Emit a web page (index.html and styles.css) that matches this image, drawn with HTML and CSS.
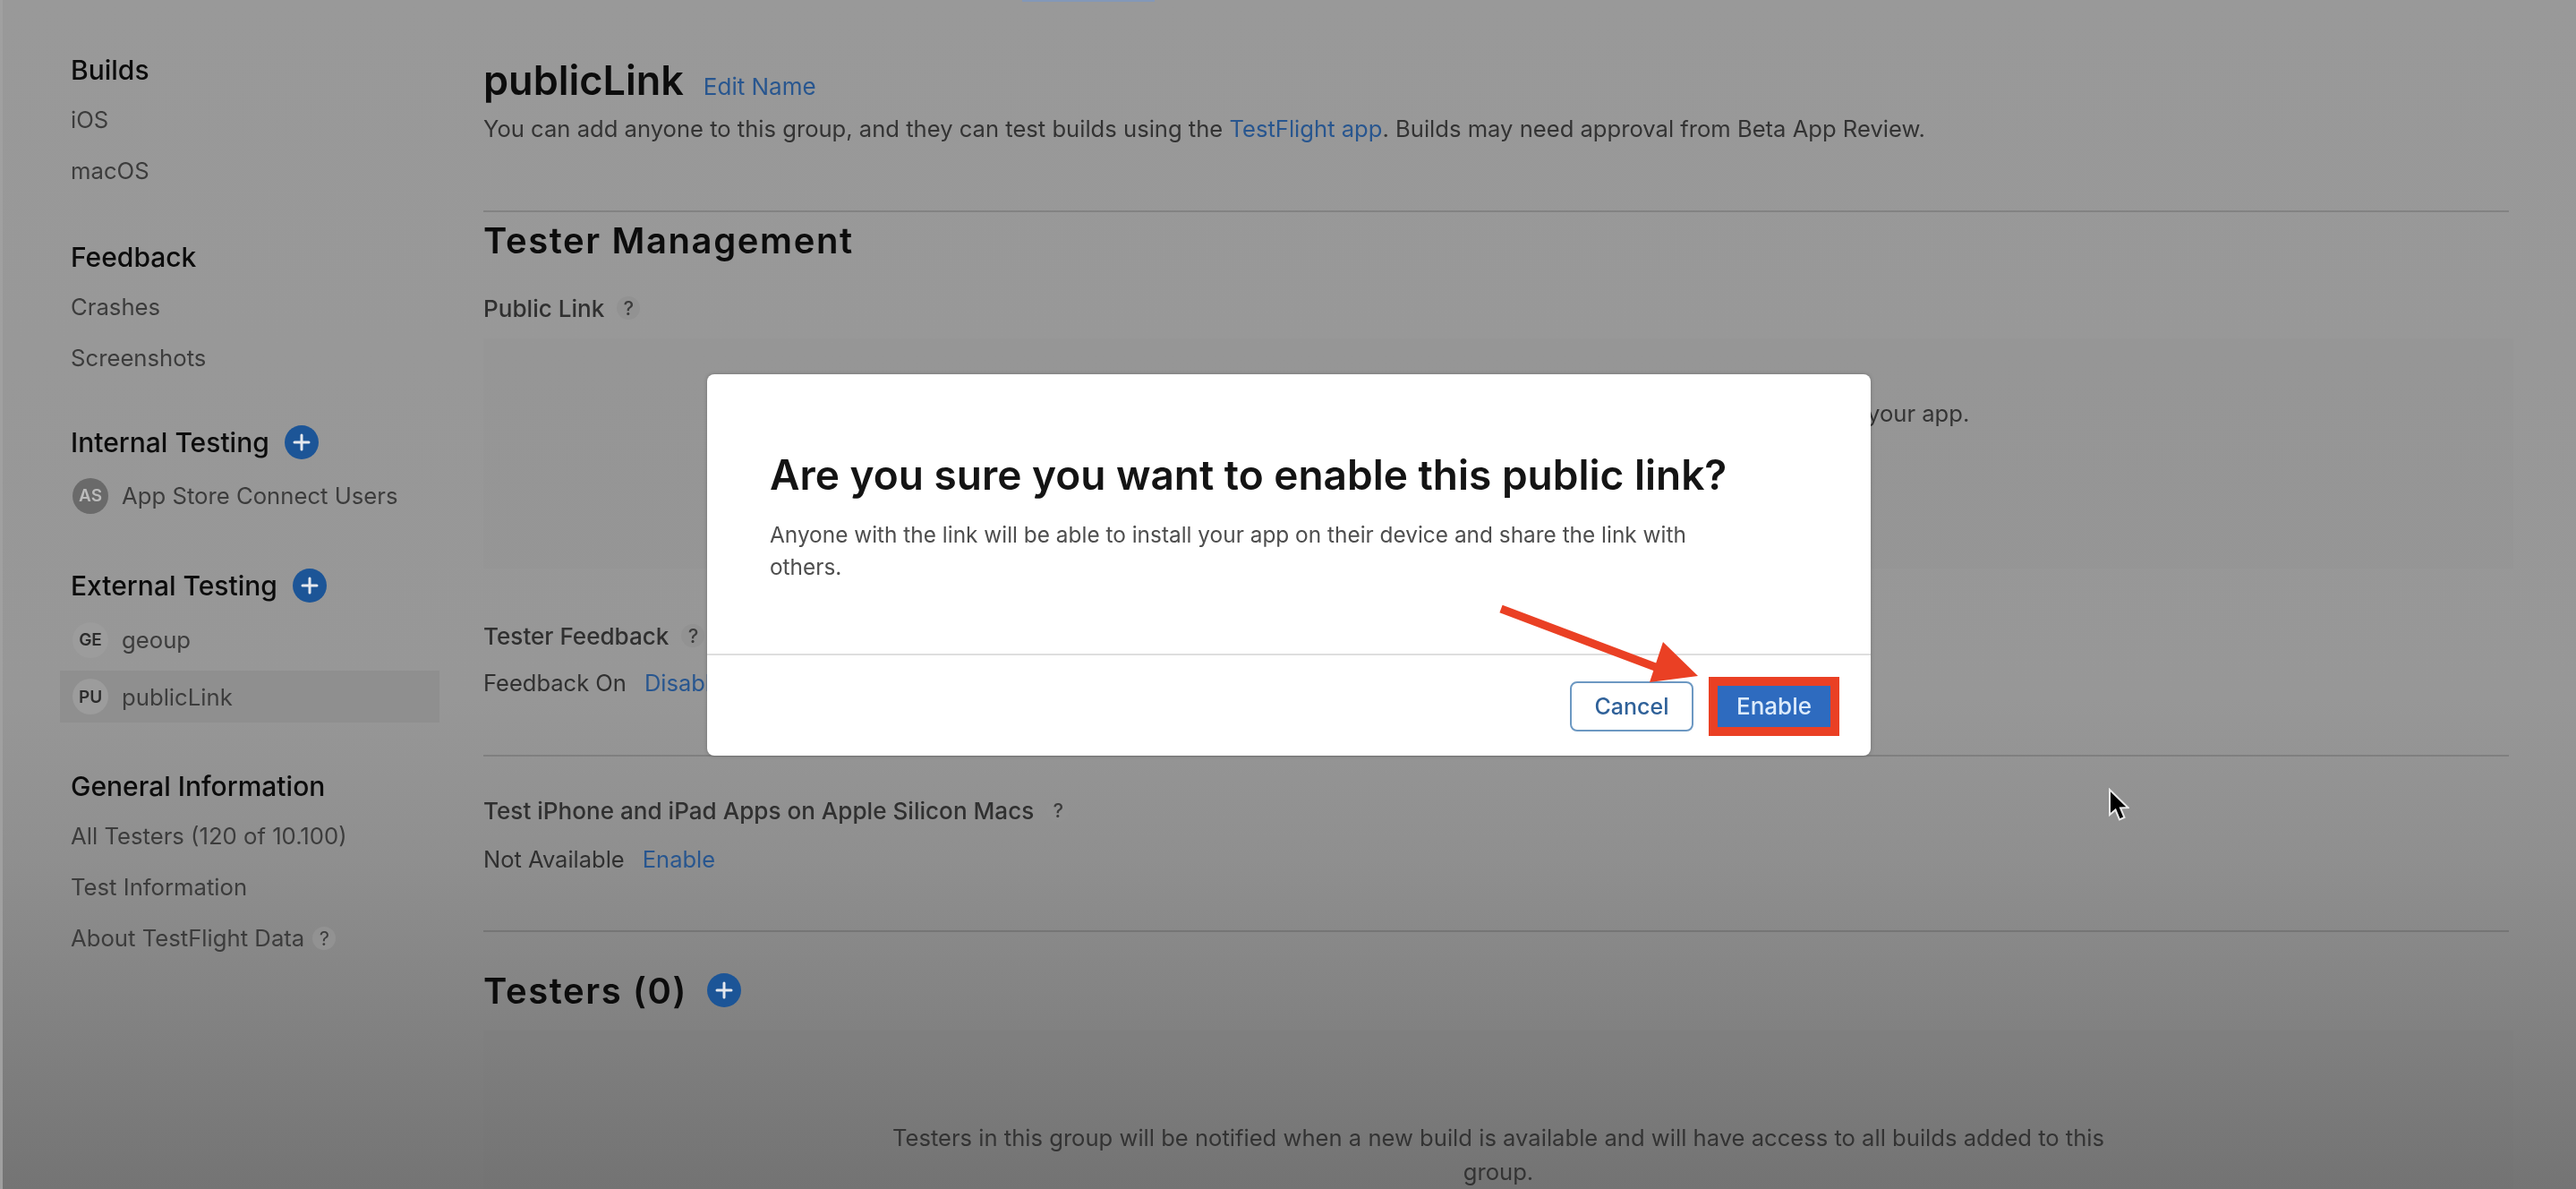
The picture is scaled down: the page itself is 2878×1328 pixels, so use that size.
FILE: index.html
```html
<!DOCTYPE html>
<html lang="en">
<head>
<meta charset="utf-8">
<title>publicLink - TestFlight</title>
<link rel="stylesheet" href="styles.css">
</head>
<body>
<div class="page">
  <div class="topstrip"><span class="topstrip-tab"></span></div>
  <div class="layout">
    <nav class="sidebar">
      <section class="nav-group nav-group-builds">
        <h3 class="nav-title">Builds</h3>
        <a class="nav-item">iOS</a>
        <a class="nav-item">macOS</a>
      </section>
      <section class="nav-group">
        <h3 class="nav-title">Feedback</h3>
        <a class="nav-item">Crashes</a>
        <a class="nav-item">Screenshots</a>
      </section>
      <section class="nav-group nav-group-internal">
        <h3 class="nav-title">Internal Testing
          <svg class="plus" viewBox="0 0 38 38"><circle cx="19" cy="19" r="19"/><path d="M19 11v16M11 19h16"/></svg>
        </h3>
        <a class="nav-item nav-avatar-row"><span class="avatar avatar-dark">AS</span>App Store Connect Users</a>
      </section>
      <section class="nav-group nav-group-external">
        <h3 class="nav-title">External Testing
          <svg class="plus" viewBox="0 0 38 38"><circle cx="19" cy="19" r="19"/><path d="M19 11v16M11 19h16"/></svg>
        </h3>
        <a class="nav-item nav-avatar-row nav-first"><span class="avatar">GE</span>geoup</a>
        <a class="nav-item nav-avatar-row nav-active"><span class="avatar">PU</span>publicLink</a>
      </section>
      <section class="nav-group">
        <h3 class="nav-title">General Information</h3>
        <a class="nav-item">All Testers (120 of 10.100)</a>
        <a class="nav-item">Test Information</a>
        <a class="nav-item">About TestFlight Data <span class="help help-tight">?</span></a>
      </section>
    </nav>
    <main class="main">
      <header class="head">
        <div class="head-row"><h1 class="page-title">publicLink</h1><a class="link link-edit">Edit Name</a></div>
        <p class="text">You can add anyone to this group, and they can test builds using the <a class="link">TestFlight app</a>. Builds may need approval from Beta App Review.</p>
      </header>
      <section class="section section-mgmt">
        <h2 class="section-title spaced">Tester Management</h2>
        <div class="label">Public Link <span class="help">?</span></div>
        <div class="panel panel-link"><p class="text">Enable a public link so that anyone with it can join this group and start testing your app.</p></div>
        <div class="label label-feedback">Tester Feedback <span class="help">?</span></div>
        <div class="value"><span>Feedback On</span><a class="link">Disable</a></div>
      </section>
      <section class="section section-macs">
        <div class="label">Test iPhone and iPad Apps on Apple Silicon Macs <span class="help">?</span></div>
        <div class="value"><span>Not Available</span><a class="link">Enable</a></div>
      </section>
      <section class="section section-testers">
        <h2 class="section-title spaced">Testers (0)
          <svg class="plus" viewBox="0 0 38 38"><circle cx="19" cy="19" r="19"/><path d="M19 11v16M11 19h16"/></svg>
        </h2>
        <div class="panel panel-testers"><p class="text">Testers in this group will be notified when a new build is available and will have access to all builds added to this group.</p></div>
      </section>
    </main>
  </div>

  <div class="dialog" role="dialog">
    <div class="dialog-body">
      <h2 class="dialog-title">Are you sure you want to enable this public link?</h2>
      <p class="dialog-text">Anyone with the link will be able to install your app on their device and share the link with others.</p>
    </div>
    <div class="dialog-footer">
      <button class="btn btn-cancel">Cancel</button>
      <span class="highlight-frame"><button class="btn btn-enable">Enable</button></span>
    </div>
  </div>

  <svg class="arrow" viewBox="0 0 230 90"><path class="arrow-line" d="M2 5 L185 74"/><path class="arrow-head" d="M222 80 L183 42 L168 87 Z"/></svg>

  <svg class="cursor" viewBox="0 0 24 38"><path d="M2 2 V30 L8.5 24.5 L13 35.5 L18.5 33 L14 22.5 L22.5 22 Z"/></svg>
</div>
</body>
</html>
```
FILE: styles.css
```css
* { box-sizing: border-box; }
html, body { margin: 0; padding: 0; }
body {
  font-family: Inter, "Liberation Sans", sans-serif;
  color: #3a3a3a;
}
.page {
  position: relative;
  width: 2878px;
  height: 1328px;
  overflow: hidden;
  background: linear-gradient(180deg, #999999 0, #979797 780px, #8f8f8f 960px, #747474 1328px);
  box-shadow: inset 3px 0 0 #a0a0a0;
}
.topstrip { height: 2px; }
.topstrip-tab { display: block; width: 148px; height: 2px; margin-left: 1142px; background: #8398b8; }
.layout { display: flex; gap: 49px; padding-left: 79px; filter: blur(0.5px); }

/* Sidebar */
.sidebar { width: 412px; flex: none; padding-top: 48px; }
.nav-group { margin-bottom: 38px; }
.nav-group-builds { margin-bottom: 40px; }
.nav-group-internal { margin-bottom: 40px; }
.nav-group-external { margin-bottom: 43px; }
.nav-title {
  display: flex;
  align-items: center;
  gap: 17px;
  height: 55px;
  margin: 0;
  font-size: 30px;
  font-weight: 500;
  color: #0c0c0c;
}
.nav-item {
  display: flex;
  align-items: center;
  height: 57px;
  font-size: 25.7px;
  color: #3c3c3c;
}
.nav-avatar-row { gap: 15px; height: 65px; margin-left: -12px; padding-left: 14px; }
.nav-first { margin-top: 1px; }
.nav-active { height: 58px; margin-top: 2px; background: #8f8f8f; }
.avatar {
  display: flex;
  align-items: center;
  justify-content: center;
  width: 40px;
  height: 40px;
  border-radius: 50%;
  background: #9c9c9c;
  color: #2c2c2c;
  font-size: 19px;
  font-weight: 600;
}
.avatar-dark { background: #6a6a6a; color: #bcbcbc; }
.plus { width: 38px; height: 38px; flex: none; }
.plus circle { fill: #1c5597; }
.plus path { stroke: #e4e8ee; stroke-width: 3; stroke-linecap: round; fill: none; }
.help {
  display: inline-flex;
  align-items: center;
  justify-content: center;
  width: 26px;
  height: 26px;
  margin-left: 14px;
  border-radius: 50%;
  background: #929292;
  color: #3c3c3c;
  font-size: 22px;
}
.help-tight { margin-left: 9px; }

/* Main */
.main { flex: 1; padding-right: 75px; min-width: 0; }
.head { padding-top: 60px; height: 235px; border-bottom: 2px solid rgba(0, 0, 0, 0.14); }
.head-row { display: flex; align-items: baseline; gap: 22px; }
.page-title { margin: 0; font-size: 45px; line-height: 56px; font-weight: 600; color: #0c0c0c; }
.link { color: #28568f; }
.link-edit { font-size: 26px; }
.text { margin: 8px 0 0; font-size: 25.6px; line-height: 36px; color: #333; }
.section { border-bottom: 2px solid rgba(0, 0, 0, 0.14); }
.section-title {
  display: flex;
  align-items: center;
  gap: 22px;
  margin: 0;
  height: 44px;
  font-size: 40px;
  font-weight: 600;
  color: #0c0c0c;
}
.spaced { letter-spacing: 1.6px; }
.section-mgmt { padding-top: 9px; height: 608px; }
.label { display: flex; align-items: center; height: 36px; font-size: 26.1px; font-weight: 500; color: #303030; }
.section-mgmt .label { margin-top: 36px; }
.panel { background: rgba(0, 0, 0, 0.006); text-align: center; }
.panel-link { height: 257px; margin-top: 16px; margin-right: -5px; padding-top: 58px; }
.section-mgmt .label-feedback { margin-top: 57px; }
.value { display: flex; gap: 20px; align-items: center; height: 36px; margin-top: 16px; font-size: 25.5px; color: #303030; }
.section-macs { padding-top: 42px; height: 196px; }
.section-macs .value { margin-top: 18px; }
.section-testers { border-bottom: 0; padding-top: 43px; }
.panel-testers { height: 300px; margin-top: 23px; padding: 93px 0 0; margin-right: -5px; }
.panel-testers .text { width: 1400px; margin: 8px auto 0; line-height: 38px; }

/* Dialog */
.dialog {
  position: absolute;
  left: 790px;
  top: 418px;
  width: 1300px;
  height: 426px;
  display: flex;
  flex-direction: column;
  background: #ffffff;
  border-radius: 8px;
  box-shadow: 0 0 4px rgba(0, 0, 0, 0.25);
  filter: blur(0.4px);
}
.dialog-body { height: 314px; padding: 83px 70px 0; border-bottom: 2px solid #dedede; }
.dialog-title { margin: 0; font-size: 46px; line-height: 58px; font-weight: 600; color: #141414; }
.dialog-text { max-width: 1060px; margin: 20px 0 0; font-size: 24.4px; line-height: 36px; color: #4e4e4e; }
.dialog-footer { flex: 1; display: flex; align-items: center; justify-content: flex-end; gap: 17px; padding: 1px 35px 0 0; }
.btn { font-family: inherit; font-size: 25px; font-weight: 500; border-radius: 8px; }
.btn-cancel { width: 138px; height: 56px; padding: 0; background: #fff; border: 2px solid #6c98c2; color: #2f6199; }
.highlight-frame { display: block; border: 10px solid #ea4024; }
.btn-enable { display: block; width: 126px; height: 46px; padding: 0; border: 0; border-radius: 0; background: #2e6bbf; color: #dcebfb; font-size: 26px; }

/* Annotations */
.arrow { position: absolute; left: 1675px; top: 675px; width: 230px; height: 90px; overflow: visible; }
.arrow-line { stroke: #ea4024; stroke-width: 9; fill: none; }
.arrow-head { fill: #ea4024; }
.cursor { position: absolute; left: 2355px; top: 880px; width: 24px; height: 38px; }
.cursor path { fill: #000; stroke: #e8e8e8; stroke-width: 2; }
```
